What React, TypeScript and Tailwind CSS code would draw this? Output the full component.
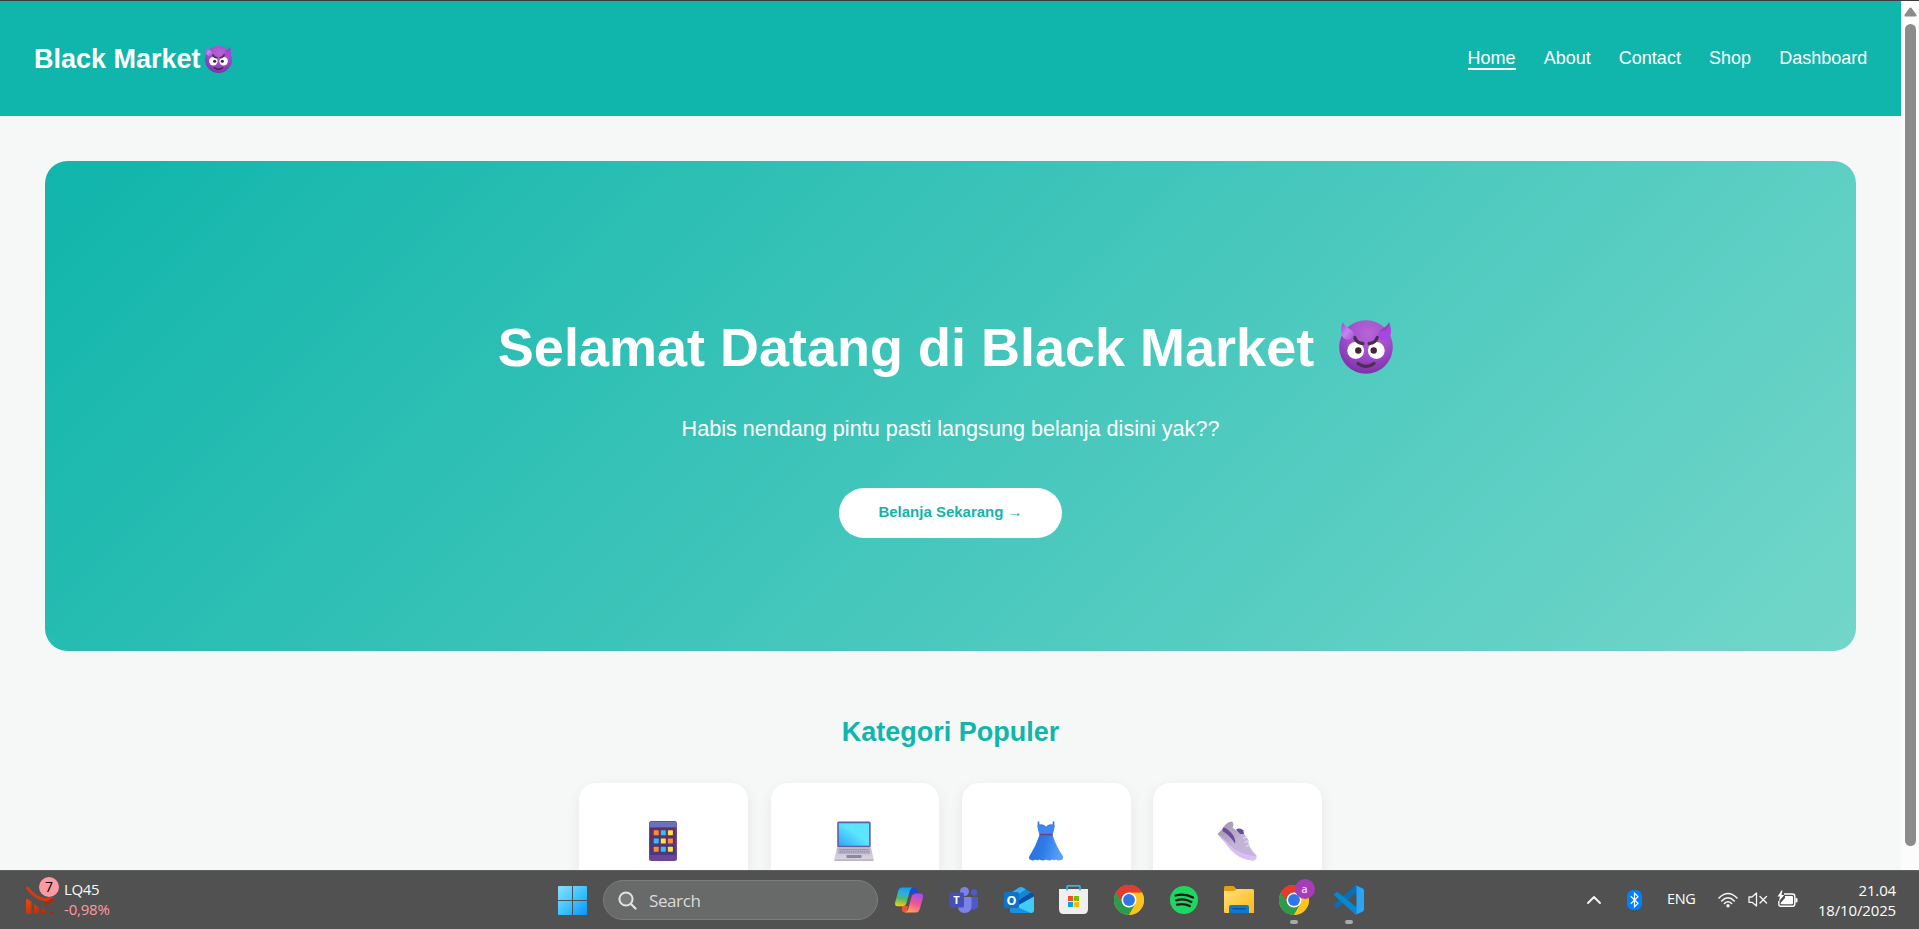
import React from "react";

const nav = ["Home", "About", "Contact", "Shop", "Dashboard"];

function Devil({ className, id }: { className: string; id: string }) {
  return (
    <svg viewBox="0 0 54 54" className={className} aria-hidden="true">
      <defs>
        <radialGradient id={id} cx="0.55" cy="0.25" r="0.78">
          <stop offset="0" stopColor="#b765d8" />
          <stop offset="0.55" stopColor="#a04ccb" />
          <stop offset="1" stopColor="#7a2fa6" />
        </radialGradient>
        <linearGradient id={id + "h"} x1="0" y1="0" x2="1" y2="1">
          <stop offset="0" stopColor="#a040d8" />
          <stop offset=".5" stopColor="#c487ee" />
          <stop offset="1" stopColor="#a74fd2" />
        </linearGradient>
      </defs>
      <circle cx="27" cy="27" r="26.8" fill={`url(#${id})`} />
      <path d="M3.8 2 C6 7 10 8 13.500 11 C17 15 14 19 10 19.500 C4 20 1.600 15 2 10 C2.200 7 3 4.500 3.800 2Z" fill={`url(#${id}h)`} />
      <path d="M50.200 2 C48 7 44 8 40.500 11 C37 15 39 20 44 20 C50 20 52.400 15 52 10 C51.800 7 51 4.500 50.200 2Z" fill="#a945e2" />
      <path d="M50.200 2 C48 7 44 8 41 11 C45 12 50 10 50.200 2Z" fill="#8a4aa8" />
      <circle cx="16.700" cy="30.500" r="8.400" fill="#fff" />
      <circle cx="37.300" cy="30.500" r="8.400" fill="#fff" />
      <circle cx="19.300" cy="30.500" r="3.200" fill="#45262f" />
      <circle cx="34.700" cy="30.500" r="3.200" fill="#45262f" />
      <path d="M15.800 17.500 Q17.500 23 23.800 23.500 M38.200 17.500 Q36.500 23 30.200 23.500 M19 43.500 Q27 49.500 35 43.500" fill="none" stroke="#49304f" strokeWidth="3.300" strokeLinecap="round" />
    </svg>
  );
}

function Phone() {
  const c = ["#ff8a3d", "#35bdf5", "#ffe14a", "#35bdf5", "#ffe14a", "#ff8a3d", "#ff8a3d", "#35bdf5", "#ffe14a"];
  return (
    <svg viewBox="0 0 40 40" className="size-10">
      <defs>
        <linearGradient id="ph" x1="0" y1="0" x2="0" y2="1">
          <stop offset="0" stopColor="#63305f" />
          <stop offset="1" stopColor="#453c7d" />
        </linearGradient>
      </defs>
      <rect x="6" y="0" width="28" height="40" rx="2.500" fill="#6b4596" />
      <path d="M6.500 6.500V2.500Q6.500 .8 8.500 .8H31.500Q33.600 .8 33.600 2.500V6.500Z" fill="#6a72bd" />
      <rect x="7" y="6.500" width="25.500" height="27.500" fill="url(#ph)" />
      {c.map((f, i) => (
        <rect key={i} x={10.700 + (i % 3) * 7.100} y={9.300 + Math.floor(i / 3) * 8.200} width="5" height="5" rx=".6" fill={f} />
      ))}
    </svg>
  );
}

function Laptop() {
  return (
    <svg viewBox="0 0 40 40" className="size-10">
      <defs>
        <linearGradient id="lp" x1="1" y1="0" x2="0" y2="1">
          <stop offset=".45" stopColor="#5ce5ff" />
          <stop offset="1" stopColor="#2ea3fb" />
        </linearGradient>
        <linearGradient id="lb" x1="0" y1="0" x2="0" y2="1">
          <stop offset="0" stopColor="#bfb8cb" />
          <stop offset="1" stopColor="#dcd7e4" />
        </linearGradient>
      </defs>
      <rect x="3.200" y=".5" width="33.500" height="26" rx="1.500" fill="#6c5ba8" />
      <rect x="4.800" y="2.300" width="30.300" height="22.400" fill="url(#lp)" />
      <path d="M3 26.500H37L39.500 37.500V39.600H.5V37.500Z" fill="url(#lb)" />
      <path d="M5 28H35L36 32.500H4Z" fill="#9d97ad" />
      <path d="M5 29.500H35M4.500 31.200H35.500" stroke="#d6d1df" strokeWidth=".7" strokeDasharray="1.300 .9" />
      <rect x="12.500" y="34" width="15" height="3" fill="#8f889d" />
      <path d="M.5 38.600H39.500V39.800H.5Z" fill="#a9a3b8" />
    </svg>
  );
}

function Dress() {
  return (
    <svg viewBox="0 0 40 40" className="size-10">
      <defs>
        <linearGradient id="dr" x1="0" y1="0" x2="1" y2=".2">
          <stop offset="0" stopColor="#2f6be0" />
          <stop offset=".5" stopColor="#2c7be8" />
          <stop offset="1" stopColor="#5a9ff8" />
        </linearGradient>
      </defs>
      <path d="M12.500 .5V5Q16.500 2.500 20 7Q23.500 2.500 27.500 5V.5" fill="none" stroke="#3976d8" strokeWidth="1.700" />
      <path d="M11.500 4.300Q16 3 20 7Q24 3 28.700 4.300Q28.500 9 26.800 13H13.300Q11.500 9 11.500 4.300Z" fill="#3f87f2" />
      <path d="M13.300 14.500H26.800Q30 25 36.800 35Q38 39 34.500 39Q32 40 30 38.500Q28 40 26.500 38.500Q23.500 40.500 20 38.500Q17 40.500 13.500 38.500Q11 40 9.500 38.500Q7 40 5 39Q2 38.500 3.500 35Q10 25 13.300 14.500Z" fill="url(#dr)" />
      <path d="M13.300 12.800H26.800V14.800H13.300Z" fill="#733f79" />
    </svg>
  );
}

function Shoe() {
  return (
    <svg viewBox="0 0 40 40" className="size-10">
      <defs>
        <linearGradient id="sh" x1="0" y1="0" x2="1" y2="1">
          <stop offset="0" stopColor="#9b90a5" />
          <stop offset=".5" stopColor="#c1b4d2" />
          <stop offset="1" stopColor="#c9b3e6" />
        </linearGradient>
      </defs>
      <path d="M.5 13L5 8.500Q9.500 .5 15 .5Q17.500 3 15.500 6.500L20 10Q24 7.500 26.500 12L31.500 19Q30 25 39.500 34.500Q39.500 39.500 35.500 39.500Q23 38.500 14 29Q8 21 .5 13Z" fill="url(#sh)" />
      <path d="M.5 13Q3 14.500 9 20Q20 33.500 39.500 35.500Q39.500 39.500 35.500 39.500Q23 38.500 14 29Q8 21 .5 13Z" fill="#dcbdf6" />
      <path d="M6 6.500Q10 6.500 16 14Q19 19 18 22.500Q13 14.500 5.500 10Z" fill="#6f4aa0" />
      <path d="M19 8.500Q23 6 26.500 9.500L27 13H23Z" fill="#64509a" />
      <path d="M26 17.500L30 15.800M27.500 21.500L31.500 19.500M29 25.500L32.500 23.800" stroke="#e3dbef" strokeWidth="1.300" />
    </svg>
  );
}

function Trend() {
  return (
    <svg viewBox="0 0 28 28" className="size-7">
      <defs>
        <linearGradient id="tr" x1="0" y1="0" x2="1" y2="1">
          <stop offset="0" stopColor="#ee4a0b" />
          <stop offset="1" stopColor="#a5260b" />
        </linearGradient>
      </defs>
      <path d="M1.500 2Q9 12 19 13.800L26 12.500" fill="none" stroke="#d13d10" strokeWidth="3" strokeLinecap="round" />
      <path d="M19 19L27 13" stroke="#a92c0c" strokeWidth="3" />
      <path d="M0 13Q3 13 5.500 16V28H1.500Q0 28 0 26.500ZM8 18.500Q11 19 13 22V28H9Q8 28 8 26.500ZM15.500 22.500Q18 22 20 25V28H17Q15.500 28 15.500 26.500ZM23 25.500Q26 24.500 27.500 25.500V28H24Q23 28 23 26.500Z" fill="url(#tr)" />
    </svg>
  );
}

function WindowsLogo() {
  return (
    <svg viewBox="0 0 29 29" className="size-[29px]">
      <defs>
        <linearGradient id="wn" x1="0" y1="0" x2="1" y2="1">
          <stop offset="0" stopColor="#8be0ff" />
          <stop offset=".5" stopColor="#3fc6fd" />
          <stop offset="1" stopColor="#0a92fb" />
        </linearGradient>
      </defs>
      <path d="M1 0H14V14H0V1Q0 0 1 0ZM15 0H28Q29 0 29 1V14H15ZM0 15H14V29H1Q0 29 0 28ZM15 15H29V28Q29 29 28 29H15Z" fill="url(#wn)" />
    </svg>
  );
}

function Copilot() {
  return (
    <svg viewBox="0 0 28 26" className="h-[26px] w-7">
      <defs>
        <linearGradient id="c1" x1=".5" y1="0" x2=".3" y2="1">
          <stop offset="0" stopColor="#1b9bea" />
          <stop offset=".3" stopColor="#2cb0e0" />
          <stop offset=".6" stopColor="#54b868" />
          <stop offset="1" stopColor="#f3cf16" />
        </linearGradient>
        <linearGradient id="c2" x1=".7" y1="0" x2=".3" y2="1">
          <stop offset="0" stopColor="#a64df5" />
          <stop offset=".5" stopColor="#ee5694" />
          <stop offset="1" stopColor="#ffa557" />
        </linearGradient>
      </defs>
      <path d="M15 .5H19Q21.500 .5 22.300 3L23.300 6.500H18Q15 6.500 14 9Z" fill="#1b49cf" />
      <path d="M7 19H13L12 23.500Q11.500 25.500 13 25.500H9.500Q7.500 25.500 6.800 23Z" fill="#ef5430" />
      <path d="M7 .5H18Q15.800 .8 14.800 4L11.500 16Q10.600 19.300 7.500 19.300H2.500Q-.8 19.300 .3 15L3.200 4Q4.200 .5 7 .5Z" fill="url(#c1)" />
      <path d="M21 6.500H25.500Q28.800 6.500 27.800 11L24.800 22Q23.800 25.500 21 25.500H10Q12.300 25.200 13.200 22L16.500 10Q17.500 6.500 21 6.500Z" fill="url(#c2)" />
    </svg>
  );
}

function Teams() {
  return (
    <svg viewBox="0 0 29 26" className="mr-px h-[26px] w-[29px]">
      <circle cx="15.500" cy="4.500" r="4.500" fill="#7b83eb" />
      <circle cx="25" cy="5.500" r="3.200" fill="#5059c9" />
      <path d="M18 10H29V18Q29 22.500 24.500 22.500H21Z" fill="#5059c9" />
      <path d="M9 10H21.500Q22.500 10 22.500 11V18.500Q22.500 26 15.500 26Q9 26 9 19Z" fill="#7b83eb" />
      <rect x="0" y="5.500" width="15" height="15" rx="1.500" fill="#464eb8" />
      <text x="7.500" y="17" textAnchor="middle" fill="#fff" fontSize="11" fontWeight="700" fontFamily="Open Sans, sans-serif">T</text>
    </svg>
  );
}

function Outlook() {
  return (
    <svg viewBox="0 0 30 26" className="h-[26px] w-[30px]">
      <path d="M5 7L15 .6Q17 -.5 19 .6L30 7.500V15L12 20L5 16Z" fill="#0f6cbd" />
      <path d="M5 7L15 .6Q17 -.5 19 .6L22 2.500L8 12H5Z" fill="#35b0f0" />
      <path d="M8 12L22 2.500L27 5.500L13 14.500Z" fill="#1286d8" />
      <path d="M13 14.500L27 5.500L30 7.500V11L14 19Z" fill="#0a4fa6" />
      <path d="M12 19.500L30 9.500V23Q30 26 27 26H12Z" fill="#40cdf5" />
      <path d="M6 20L13 20L27 26H8Q6 26 6 24Z" fill="#1c90dc" />
      <rect x="0" y="5" width="15" height="16" rx="1.500" fill="#0d74c9" />
      <text x="7.500" y="17.500" textAnchor="middle" fill="#fff" fontSize="12.500" fontWeight="700" fontFamily="Open Sans, sans-serif">O</text>
    </svg>
  );
}

function Store() {
  return (
    <svg viewBox="0 0 29 29" className="mr-px size-[29px]">
      <path d="M8 5V2Q8 .8 9.500 .8H20Q21 .8 21 2V5" fill="none" stroke="#2db5e8" strokeWidth="1.800" />
      <path d="M0 4H29V24Q29 29 24.500 29H4.500Q0 29 0 24Z" fill="#efefef" />
      <path d="M8 4V5.500M21 4V5.500" stroke="#2db5e8" strokeWidth="1.800" />
      <path d="M9 11H14V16H9Z" fill="#f25022" />
      <path d="M15 11H20V16H15Z" fill="#7fba00" />
      <path d="M9 17H14V22H9Z" fill="#00a4ef" />
      <path d="M15 17H20V22H15Z" fill="#ffb900" />
    </svg>
  );
}

function Chrome() {
  return (
    <svg viewBox="0 0 48 48" className="size-[30px]">
      <circle cx="24" cy="24" r="24" fill="#fbc116" />
      <path d="M24 24L3.200 12A24 24 0 0 0 24 48L34.400 30Z" fill="#2d9b4c" />
      <path d="M3.200 12A24 24 0 0 1 44.800 12H24L13.600 30Z" fill="#e33b2e" />
      <path d="M24 12H44.800A24 24 0 0 1 24 48L34.400 30Z" fill="#fcc31c" />
      <path d="M3.200 12L13.600 30Q18 36 24 36L24 24Z" fill="#2d9b4c" />
      <path d="M3.200 12A24 24 0 0 1 44.800 12H24Q17 12 13.600 18L11 24Z" fill="#e33b2e" />
      <circle cx="24" cy="24" r="12" fill="#fff" />
      <circle cx="24" cy="24" r="9.500" fill="#2f76e8" />
    </svg>
  );
}

function Spotify() {
  return (
    <svg viewBox="0 0 28 28" className="size-7">
      <circle cx="14" cy="14" r="14" fill="#1ed760" />
      <path d="M5.500 9.500Q15 7 23 11.500M6.300 14.300Q14.500 12 21.300 16M7 18.600Q14 17 19.800 20" fill="none" stroke="#131a15" strokeWidth="2.300" strokeLinecap="round" />
    </svg>
  );
}

function Folder() {
  return (
    <svg viewBox="0 0 30 27" className="h-[27px] w-[30px]">
      <defs>
        <linearGradient id="fo" x1="0" y1="0" x2="1" y2="1">
          <stop offset="0" stopColor="#ffe07a" />
          <stop offset="1" stopColor="#fdb913" />
        </linearGradient>
      </defs>
      <path d="M0 1.500Q0 0 1.500 0H9.500L13 3.500V8H0Z" fill="#e3a008" />
      <path d="M0 5H10L13 3H28.500Q30 3 30 4.500V27H1.500Q0 27 0 25.500Z" fill="url(#fo)" />
      <path d="M5 27V21Q5 19 7 19H23Q25 19 25 21V27Z" fill="#0f79d0" />
      <path d="M8.500 22.800H21.500" stroke="#0a4f96" strokeWidth="1.300" />
    </svg>
  );
}

function VSCode() {
  return (
    <svg viewBox="0 0 100 100" className="size-[30px]">
      <path d="M72 1L96 12Q100 14 100 18V30L72 28L13 76Q10 78 7 76L1.500 71Q-1 68 1.500 65Z" fill="#0a6fb8" />
      <path d="M72 99L96 88Q100 86 100 82V70L72 72L13 24Q10 22 7 24L1.500 29Q-1 32 1.500 35Z" fill="#0a87d1" />
      <path d="M72 1L96 12Q100 14 100 18V82Q100 86 96 88L72 99Q75 97 75 93V7Q75 3 72 1Z" fill="#2aa4f4" />
    </svg>
  );
}

function AppSlot({ children, running }: { children: React.ReactNode; running?: boolean }) {
  return (
    <div className="relative flex h-full w-[55px] items-center justify-center pb-px">
      {children}
      {running && <span className="absolute bottom-[5px] left-[23.500px] h-1 w-2 rounded-full bg-[#a9a9a9]" />}
    </div>
  );
}

function Taskbar() {
  return (
    <footer className="flex h-[59px] shrink-0 items-center border-t border-[#5d605f] bg-[#505150] font-['Open_Sans','Noto_Sans',sans-serif] text-white">
      <div className="relative ml-[26px] flex w-[532px] items-center">
        <Trend />
        <span className="absolute top-[-2px] left-[13px] flex size-5 items-center justify-center rounded-full bg-[#ff99a4] text-[14px] leading-none text-black">7</span>
        <div className="ml-[10px] pb-0.5 text-[15px] leading-5 tracking-[-0.350px]">
          <div className="text-[#fafafa]">LQ45</div>
          <div className="tracking-[-0.200px] text-[#ff99a4]">-0,98%</div>
        </div>
      </div>
      <WindowsLogo />
      <div className="ml-4 flex h-10 w-[275px] items-center rounded-full border border-[#7c7d7c] bg-[#686a69]">
        <svg viewBox="0 0 19 19" className="ml-3.5 size-[19px]">
          <circle cx="8" cy="8" r="6.600" fill="#777a79" stroke="#e2e2e2" strokeWidth="2" />
          <path d="M13 13L17.500 17.500" stroke="#e2e2e2" strokeWidth="2.300" strokeLinecap="round" />
        </svg>
        <span className="ml-3 text-[17px] leading-none tracking-[-0.400px] text-[#dadada]">Search</span>
      </div>
      <div className="ml-[3.500px] flex h-full items-center">
        <AppSlot><Copilot /></AppSlot>
        <AppSlot><Teams /></AppSlot>
        <AppSlot><Outlook /></AppSlot>
        <AppSlot><Store /></AppSlot>
        <AppSlot><Chrome /></AppSlot>
        <AppSlot><Spotify /></AppSlot>
        <AppSlot><Folder /></AppSlot>
        <AppSlot running>
          <Chrome />
          <span className="absolute top-[8px] left-[28px] flex size-5 items-center justify-center rounded-full bg-[#a63db8] pb-0.5 text-[11px] font-semibold leading-none text-[#f0d5f5]">a</span>
        </AppSlot>
        <AppSlot running><VSCode /></AppSlot>
      </div>
      <div className="ml-auto flex items-center pr-[23px] pb-px">
        <svg viewBox="0 0 14 8" className="w-3.5">
          <path d="M1 7L7 1L13 7" fill="none" stroke="#f4f4f4" strokeWidth="1.900" strokeLinecap="round" strokeLinejoin="round" />
        </svg>
        <svg viewBox="0 0 15 20" className="ml-[26px] h-5 w-[15px]">
          <rect width="15" height="20" rx="6" fill="#0080ff" />
          <path d="M3.800 6.300L11 13.300L7.500 16.800V3.200L11 6.700L3.800 13.700" fill="none" stroke="#fff" strokeWidth="1.200" />
        </svg>
        <span className="ml-[25px] w-[51px] text-[14.500px] leading-none tracking-[-0.300px]">ENG</span>
        <svg viewBox="0 0 20 16" className="h-4 w-5">
          <path d="M1 6Q10 -3 19 6M3.700 9Q10 2.500 16.300 9M6.400 11.500Q10 8 13.600 11.500" fill="none" stroke="#f5f5f5" strokeWidth="1.600" strokeLinecap="round" />
          <circle cx="10" cy="13.700" r="1.700" fill="#fff" />
        </svg>
        <svg viewBox="0 0 20 15" className="ml-2.5 h-[15px] w-5">
          <path d="M1 5H4L8.500 1V14L4 10.300H1Z" fill="none" stroke="#f5f5f5" strokeWidth="1.300" strokeLinejoin="round" />
          <path d="M12 4.500L18.500 11M18.500 4.500L12 11" stroke="#f5f5f5" strokeWidth="1.400" strokeLinecap="round" />
        </svg>
        <svg viewBox="0 0 21 18" className="mb-0.5 ml-[9px] h-[18px] w-[21px]">
          <path d="M7 4H15.500Q17.800 4 17.800 6.200V14Q17.800 16.300 15.500 16.300H4Q1.800 16.300 1.800 14V11" fill="none" stroke="#fff" strokeWidth="1.400" />
          <path d="M8 6H15Q16 6 16 7V13.300Q16 14.300 15 14.300H5Q3.800 14.300 3.500 13L8 8Z" fill="#fff" />
          <path d="M18.500 8H19.500Q20.500 8 20.500 9V11.500Q20.500 12.500 19.500 12.500H18.500Z" fill="#fff" />
          <path d="M4.500 .5L.5 6.500H3L1.800 11.500L7.200 5H4.500L5.500 .5Z" fill="#fff" />
        </svg>
        <div className="w-[98px] text-right text-[15px] leading-5 tracking-[-0.150px]">
          <div>21.04</div>
          <div>18/10/2025</div>
        </div>
      </div>
    </footer>
  );
}

export default function App() {
  return (
    <div className="flex h-[929px] w-[1919px] flex-col overflow-hidden bg-[#f5f8f7] font-['Liberation_Sans',Arial,sans-serif]">
      <div className="h-px shrink-0 bg-[#3c3c3c]" />
      <div className="flex h-[869px] shrink-0">
        <div className="w-[1901px] overflow-hidden">
          <header className="flex h-[115px] items-center justify-between bg-[#10b5ab] pr-[33.750px] pl-[34px] text-white">
            <div className="flex items-center pt-0.5 text-[27px] font-bold leading-none">
              <span>Black Market</span>
              <Devil id="d1" className="ml-[4.500px] size-[27px]" />
            </div>
            <nav className="flex gap-[28.125px] text-[18px]">
              {nav.map((n) => (
                <a key={n} className={n === "Home" ? "border-b-2 border-white pt-0.5 leading-[19px]" : "border-b-2 border-transparent pt-0.5 leading-[19px]"}>{n}</a>
              ))}
            </nav>
          </header>
          <section className="mx-[45px] mt-[45px] flex h-[490px] flex-col items-center rounded-[22.500px] bg-[linear-gradient(135deg,#10b5ab,#73d6ca)] pt-[155px] text-white">
            <h1 className="flex items-center text-[54px] font-bold leading-[62px]">
              <span>Selamat Datang di Black Market</span>
              <Devil id="d2" className="mr-[10px] ml-[25px] size-[54px]" />
            </h1>
            <p className="mt-[38px] text-[21.600px] leading-[25px]">Habis nendang pintu pasti langsung belanja disini yak??</p>
            <button className="mt-[47px] h-[50px] w-[223px] rounded-full bg-white pb-0.5 text-[15px] font-bold text-[#10b5ab]">
              Belanja Sekarang <span className="font-['Liberation_Serif',serif] font-normal leading-none">→</span>
            </button>
          </section>
          <section className="flex flex-col items-center">
            <h2 className="mt-[66px] text-[27px] font-bold leading-[31px] text-[#10b5ab]">Kategori Populer</h2>
            <div className="mt-[35px] flex gap-[22.500px]">
              {[<Phone key="p" />, <Laptop key="l" />, <Dress key="d" />, <Shoe key="s" />].map((icon, i) => (
                <div key={i} className="flex h-[180px] w-[168.750px] justify-center rounded-[17px] bg-white pt-[38px] pr-px shadow-[0_4px_14px_rgba(0,0,0,0.07)]">{icon}</div>
              ))}
            </div>
          </section>
        </div>
        <div className="flex w-[18px] flex-col items-center bg-[#fcfcfc] pt-1.5 pl-px">
          <svg viewBox="0 0 13 10" className="h-2.5 w-[13px]">
            <path d="M5.500 1Q6.500 -.2 7.500 1L12.300 7.500Q13 9.500 11.500 9.500H1.500Q0 9.500 .7 7.500Z" fill="#8b8b8b" />
          </svg>
          <div className="mt-[7px] h-[822px] w-[11px] rounded-full bg-[#8b8b8b]" />
        </div>
      </div>
      <Taskbar />
    </div>
  );
}
